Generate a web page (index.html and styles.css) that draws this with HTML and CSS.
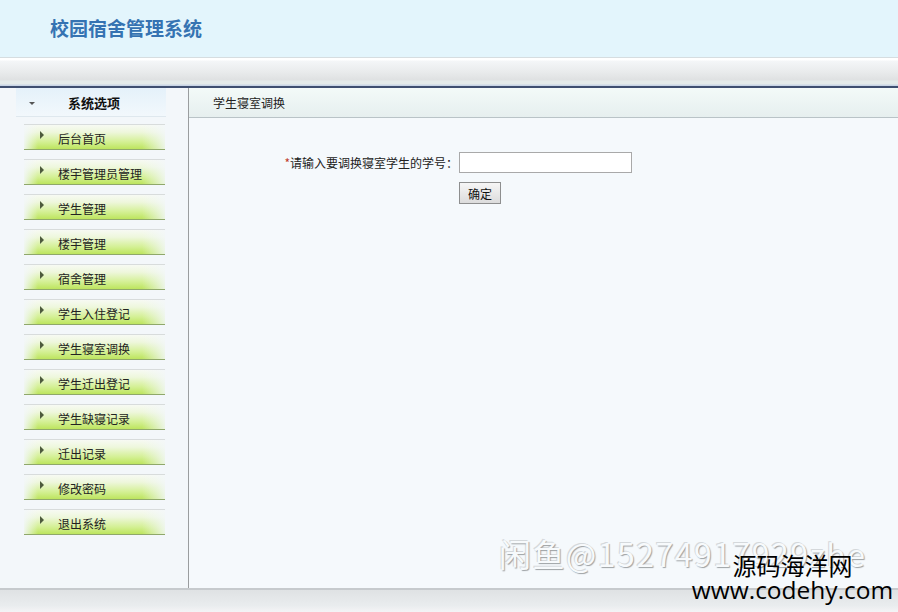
FILE: index.html
```html
<!DOCTYPE html>
<html lang="zh">
<head>
<meta charset="utf-8">
<title>校园宿舍管理系统</title>
<link rel="stylesheet" href="styles.css">
</head>
<body>
<div class="page">
  <header class="top">
    <h1 class="logo">校园宿舍管理系统</h1>
  </header>
  <div class="toolbar"></div>
  <div class="main">
    <aside class="side">
      <div class="side-head">
        <span class="down"></span>
        <span class="side-title">系统选项</span>
      </div>
      <ul class="menu">
        <li class="item"><span class="tri"></span>后台首页</li>
        <li class="item"><span class="tri"></span>楼宇管理员管理</li>
        <li class="item"><span class="tri"></span>学生管理</li>
        <li class="item"><span class="tri"></span>楼宇管理</li>
        <li class="item"><span class="tri"></span>宿舍管理</li>
        <li class="item"><span class="tri"></span>学生入住登记</li>
        <li class="item"><span class="tri"></span>学生寝室调换</li>
        <li class="item"><span class="tri"></span>学生迁出登记</li>
        <li class="item"><span class="tri"></span>学生缺寝记录</li>
        <li class="item"><span class="tri"></span>迁出记录</li>
        <li class="item"><span class="tri"></span>修改密码</li>
        <li class="item"><span class="tri"></span>退出系统</li>
      </ul>
    </aside>
    <section class="content">
      <div class="content-head">学生寝室调换</div>
      <form class="form">
        <label class="label" for="sno"><span class="req">*</span>请输入要调换寝室学生的学号：</label>
        <input class="input" id="sno" type="text">
        <span></span>
        <button class="btn" type="button">确定</button>
      </form>
      <div class="wm1">闲鱼@15274917929zhe</div>
      <div class="wm2">源码海洋网<br><span class="wm-url">www.codehy.com</span></div>
    </section>
  </div>
  <footer class="bottom"></footer>
</div>
</body>
</html>
```
FILE: styles.css
```css
* { box-sizing: border-box; }
html, body { margin: 0; padding: 0; }
body {
  width: 898px;
  height: 612px;
  overflow: hidden;
  font-family: "Noto Sans CJK SC", "Liberation Sans", sans-serif;
  font-size: 12px;
  color: #222;
  background: #f4f8fb;
}
.page { display: flex; flex-direction: column; height: 612px; }

.top {
  height: 57px;
  background: #e3f5fc;
  display: flex;
  align-items: center;
  padding-left: 50px;
}
.logo {
  margin: 0 0 2px 0;
  font-size: 19px;
  font-weight: bold;
  color: #3573b2;
  font-family: "Noto Sans CJK SC", serif;
}

.toolbar {
  height: 31px;
  border-top: 1px solid #d6dde0;
  border-bottom: 2px solid #3e4f70;
  background: linear-gradient(to bottom, #ffffff 0px, #ffffff 2px, #f4f6f8 3px, #e9ebec 14px, #dfe1e2 22px, #e4ebea 23px, #e4ebea 26px, #c9d5e5 27px, #c9d5e5 28px);
}

.main { flex: 1; display: flex; min-height: 0; }

.side {
  width: 189px;
  border-right: 1px solid #9a9d9f;
  background: #f3f7fa;
  padding-left: 16px;
}
.side-head {
  width: 150px;
  height: 29px;
  display: flex;
  align-items: center;
  background: linear-gradient(to bottom, #e4f1fa, #f2f8fc);
  border-bottom: 1px solid #dfe8ee;
}
.down {
  width: 0; height: 0;
  margin-left: 13px;
  margin-top: 2px;
  border-left: 3px solid transparent;
  border-right: 3px solid transparent;
  border-top: 3px solid #555;
}
.side-title {
  margin-left: 33px;
  font-size: 13px;
  font-weight: bold;
  color: #111;
}
.menu {
  list-style: none;
  margin: 0;
  padding: 7px 0 0 8px;
}
.item {
  width: 141px;
  height: 26px;
  margin-top: 9px;
  border-top: 1px solid #d8dcdc;
  border-bottom: 1px solid #8fa86a;
  display: flex;
  align-items: center;
  padding-top: 2px;
  color: #222;
  background:
    linear-gradient(to right, rgba(243,247,250,0.9) 0, rgba(243,247,250,0) 14px, rgba(243,247,250,0) 118px, rgba(243,247,250,0.85) 141px),
    linear-gradient(to bottom, #f7faf3 0%, #eef7dc 30%, #d4f095 70%, #bde55e 100%);
}
.item:first-child { margin-top: 0; }
.tri {
  width: 0; height: 0;
  margin-left: 16px;
  margin-right: 14px;
  margin-top: -6px;
  border-top: 4px solid transparent;
  border-bottom: 4px solid transparent;
  border-left: 4px solid #4d5a3c;
}

.content {
  flex: 1;
  position: relative;
  background: #f5f9fc;
}
.content-head {
  height: 30px;
  padding-left: 24px;
  display: flex;
  align-items: center;
  border-bottom: 1px solid #b9c3c7;
  background: linear-gradient(to bottom, #f3faf8, #e6efef);
  color: #222;
}
.form {
  display: grid;
  grid-template-columns: 175px 173px;
  row-gap: 9px;
  padding: 34px 0 0 94px;
  align-items: center;
}
.label { text-align: right; color: #222; white-space: nowrap; }
.req { color: #c0392b; }
.input {
  width: 173px;
  height: 21px;
  border: 1px solid #a9a9a9;
  background: #fff;
  margin: 0 0 0 1px;
}
.btn {
  justify-self: start;
  width: 42px;
  height: 22px;
  margin-left: 1px;
  padding: 0;
  font-family: "Noto Sans CJK SC", sans-serif;
  font-size: 12px;
  color: #111;
  border: 1px solid #8e8f8f;
  background: linear-gradient(to bottom, #f6f6f6, #dcdcdc);
}

.wm1 {
  position: absolute;
  left: 310px;
  top: 442px;
  font-size: 32px;
  letter-spacing: 1.5px;
  font-family: "Noto Sans CJK SC", sans-serif;
  color: #f7fafc;
  text-shadow: 1px 1px 1px #9da1a4, -1px -1px 0 #d4d8db;
  white-space: nowrap;
}
.wm2 {
  position: absolute;
  left: 501px;
  top: 465px;
  width: 205px;
  text-align: center;
  font-size: 24px;
  line-height: 24px;
  color: #000;
  font-family: "Noto Sans CJK SC", sans-serif;
  white-space: nowrap;
}
.wm-url { font-family: "Open Sans", sans-serif; font-size: 24.5px; }

.bottom {
  height: 24px;
  border-top: 2px solid #c6cacd;
  background: linear-gradient(to bottom, #dfe2e4, #e9ecee 70%, #f4f4f6);
}
```
